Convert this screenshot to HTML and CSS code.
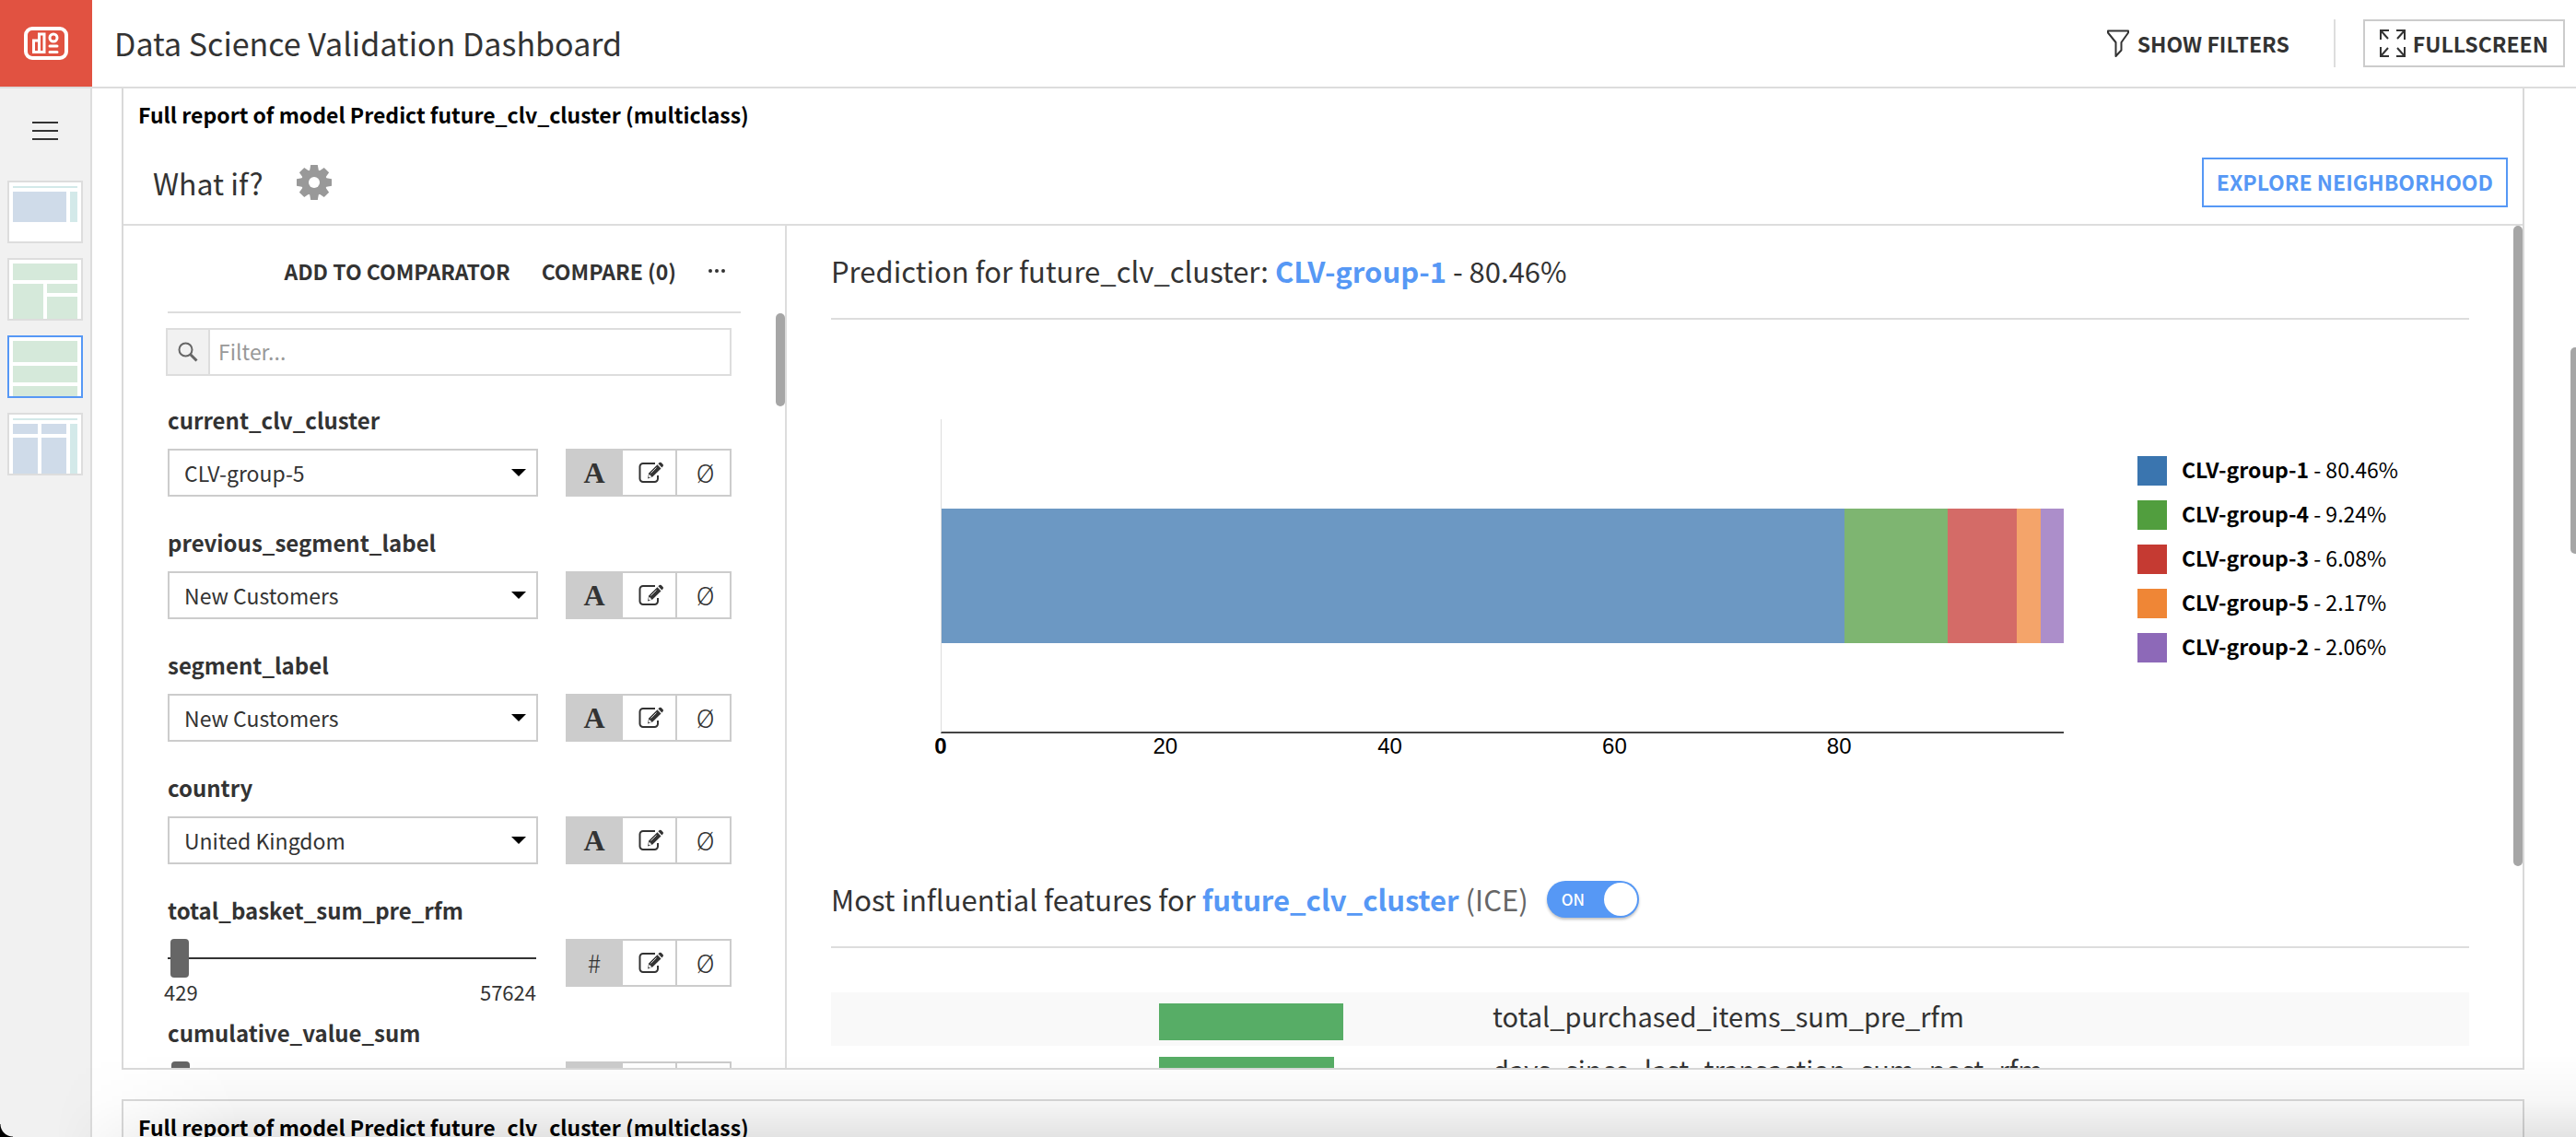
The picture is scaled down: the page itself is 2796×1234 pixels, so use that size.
FILE: index.html
```html
<!DOCTYPE html>
<html lang="en">
<head>
    <meta charset="UTF-8">
    <meta name="viewport" content="width=device-width, initial-scale=1.0">
    <title>Data Science Validation Dashboard</title>
    <link rel="stylesheet" href="styles.css">
</head>
<body>
    <svg class="icon-defs" width="0" height="0" aria-hidden="true">
        <symbol id="icon-edit" viewBox="0 0 28 24">
            <path d="M18 2H5a3.500 3.500 0 0 0-3.500 3.500v13A3.500 3.500 0 0 0 5 22h12.500a3.500 3.500 0 0 0 3.500-3.500V15" fill="none" stroke="#333" stroke-width="2"/>
            <path d="M20.500 3.200l4 4.200L15.300 16.600l-5.300 2 1.200-6z" fill="#333"/>
            <path d="M21.400 2.300l1.300-1.200q1-.9 2 0l1.900 2q.9 1 0 2l-1.200 1.300z" fill="#333"/>
            <path d="M11.900 14.300l2 2.200-1.900.6-.7-.7zM19.500 6.500l-6 6" fill="#fff" stroke="#fff" stroke-width=".8"/>
        </symbol>
    </svg>

    <header class="topbar">
        <a class="logo" href="#" aria-label="Dashboards">
            <svg width="48" height="36" viewBox="0 0 48 36" fill="none" stroke="#fff">
                <rect x="2" y="2" width="44" height="32" rx="7" stroke-width="4"/>
                <path d="M10.500 15h6v12.500h-6zM16.500 8h5.500v19.500h-5.500z" stroke-width="3"/>
                <circle cx="32" cy="12" r="4" stroke-width="3"/>
                <path d="M28 21h8M28 27.500h8" stroke-width="3" stroke-linecap="round"/>
            </svg>
        </a>
        <h1>Data Science Validation Dashboard</h1>
        <div class="topbar-actions">
            <button class="btn-plain">
                <svg width="24" height="30" viewBox="0 0 24 30" fill="none" stroke="#333" stroke-width="2" stroke-linejoin="round">
                    <path d="M1 1.500h22v2L15.500 14v8.500L9.500 29V14L1 3.500z"/>
                </svg>
                SHOW FILTERS
            </button>
            <span class="divider"></span>
            <button class="btn-outline">
                <svg width="28" height="30" viewBox="0 0 28 30" fill="none" stroke="#333" stroke-width="2">
                    <path d="M10 1H1v10M1 1l8 9M18 1h9v10M27 1l-8 9M1 19v10h9M1 29l8-9M27 19v10h-9M27 29l-8-9"/>
                </svg>
                FULLSCREEN
            </button>
        </div>
    </header>

    <div class="page">
        <nav class="sidebar">
            <button class="menu-btn" aria-label="Menu"><span></span><span></span><span></span></button>
            <a class="thumb" href="#" aria-label="Page 1">
                <svg width="78" height="64">
                    <path fill="#d3e9e9" d="M4 4h70v2H4zM66 10h8v33h-8z"/>
                    <path fill="#cfdbe9" d="M4 10h58v33H4z"/>
                </svg>
            </a>
            <a class="thumb" href="#" aria-label="Page 2">
                <svg width="78" height="64">
                    <path fill="#d5e9da" d="M4 4h70v18H4zM4 26h33v38H4zM41 26h33v10H41zM41 40h33v24H41z"/>
                </svg>
            </a>
            <a class="thumb active" href="#" aria-label="Page 3">
                <svg width="78" height="64">
                    <path fill="#d5e9da" d="M4 4h70v23H4zM4 31h70v18H4zM4 53h70v11H4z"/>
                </svg>
            </a>
            <a class="thumb" href="#" aria-label="Page 4">
                <svg width="78" height="64">
                    <path fill="#d3e9e9" d="M4 4h70v2H4zM66 10h8v54h-8z"/>
                    <path fill="#cfdbe9" d="M4 10h27v11H4zM35 10h27v11H35zM4 25h27v39H4zM35 25h27v39H35z"/>
                </svg>
            </a>
        </nav>

        <main class="board">
            <section class="tile tile-main">
                <h2 class="tile-title">Full report of model Predict future_clv_cluster (multiclass)</h2>
                <div class="whatif-bar">
                    <span class="whatif-title">What if?</span>
                    <button class="gear-btn" aria-label="Settings">
                        <svg width="38" height="38" viewBox="-19 -19 38 38" fill="#999">
                            <path id="tooth" d="M-5-12l1.200-7h7.600l1.200 7v24l-1.200 7h-7.600l-1.200-7z"/>
                            <use href="#tooth" transform="rotate(45)"/>
                            <use href="#tooth" transform="rotate(90)"/>
                            <use href="#tooth" transform="rotate(135)"/>
                            <circle r="14"/>
                            <circle r="6" fill="#fff"/>
                        </svg>
                    </button>
                    <button class="btn-explore">EXPLORE NEIGHBORHOOD</button>
                </div>

                <div class="panes">
                    <div class="inputs">
                        <div class="compare-bar">
                            <button>ADD TO COMPARATOR</button>
                            <button>COMPARE (0)</button>
                            <button aria-label="More">
                                <svg width="20" height="4" viewBox="0 0 20 4" fill="#333"><circle cx="3" cy="2" r="2"/><circle cx="10" cy="2" r="2"/><circle cx="17" cy="2" r="2"/></svg>
                            </button>
                        </div>
                        <div class="filter">
                            <label for="filter" aria-label="Filter">
                                <svg width="22" height="22" viewBox="0 0 22 22" fill="none" stroke="#666"><circle cx="8.500" cy="8.500" r="7" stroke-width="2"/><path d="M13.500 13.500l7 7" stroke-width="3"/></svg>
                            </label>
                            <input type="text" id="filter" placeholder="Filter...">
                        </div>

                        <div class="feature">
                            <label for="f1">current_clv_cluster</label>
                            <div class="feature-row">
                                <div class="select"><select id="f1"><option>CLV-group-5</option></select></div>
                                <div class="modes">
                                    <button class="on serif">A</button>
                                    <button aria-label="Edit"><svg width="28" height="24"><use href="#icon-edit"/></svg></button>
                                    <button>Ø</button>
                                </div>
                            </div>
                        </div>
                        <div class="feature">
                            <label for="f2">previous_segment_label</label>
                            <div class="feature-row">
                                <div class="select"><select id="f2"><option>New Customers</option></select></div>
                                <div class="modes">
                                    <button class="on serif">A</button>
                                    <button aria-label="Edit"><svg width="28" height="24"><use href="#icon-edit"/></svg></button>
                                    <button>Ø</button>
                                </div>
                            </div>
                        </div>
                        <div class="feature">
                            <label for="f3">segment_label</label>
                            <div class="feature-row">
                                <div class="select"><select id="f3"><option>New Customers</option></select></div>
                                <div class="modes">
                                    <button class="on serif">A</button>
                                    <button aria-label="Edit"><svg width="28" height="24"><use href="#icon-edit"/></svg></button>
                                    <button>Ø</button>
                                </div>
                            </div>
                        </div>
                        <div class="feature">
                            <label for="f4">country</label>
                            <div class="feature-row">
                                <div class="select"><select id="f4"><option>United Kingdom</option></select></div>
                                <div class="modes">
                                    <button class="on serif">A</button>
                                    <button aria-label="Edit"><svg width="28" height="24"><use href="#icon-edit"/></svg></button>
                                    <button>Ø</button>
                                </div>
                            </div>
                        </div>
                        <div class="feature">
                            <label for="f5">total_basket_sum_pre_rfm</label>
                            <div class="feature-row">
                                <div class="range">
                                    <input type="range" id="f5" min="429" max="57624" value="880">
                                    <div class="range-ends"><span>429</span><span>57624</span></div>
                                </div>
                                <div class="modes">
                                    <button class="on">#</button>
                                    <button aria-label="Edit"><svg width="28" height="24"><use href="#icon-edit"/></svg></button>
                                    <button>Ø</button>
                                </div>
                            </div>
                        </div>
                        <div class="feature">
                            <label for="f6">cumulative_value_sum</label>
                            <div class="feature-row">
                                <div class="range">
                                    <input type="range" id="f6" min="0" max="100" value="1">
                                </div>
                                <div class="modes">
                                    <button class="on" aria-label="Value"></button>
                                    <button aria-label="Edit"></button>
                                    <button aria-label="Empty"></button>
                                </div>
                            </div>
                        </div>
                        <span class="scrollbar"></span>
                    </div>

                    <div class="results">
                        <h3><span>Prediction for future_clv_cluster: <b>CLV-group-1</b> - 80.46%</span></h3>
                        <div class="chart">
                            <div class="plot">
                                <div class="plot-area">
                                    <div class="stack">
                                        <span class="g1" style="width: 80.46%"></span>
                                        <span class="g4" style="width: 9.24%"></span>
                                        <span class="g3" style="width: 6.08%"></span>
                                        <span class="g5" style="width: 2.17%"></span>
                                        <span class="g2" style="width: 2.06%"></span>
                                    </div>
                                </div>
                                <div class="ticks">
                                    <span><b>0</b></span>
                                    <span>20</span>
                                    <span>40</span>
                                    <span>60</span>
                                    <span>80</span>
                                </div>
                            </div>
                            <ul class="legend">
                                <li class="l1"><b>CLV-group-1</b> - 80.46%</li>
                                <li class="l4"><b>CLV-group-4</b> - 9.24%</li>
                                <li class="l3"><b>CLV-group-3</b> - 6.08%</li>
                                <li class="l5"><b>CLV-group-5</b> - 2.17%</li>
                                <li class="l2"><b>CLV-group-2</b> - 2.06%</li>
                            </ul>
                        </div>

                        <h3>
                            <span>Most influential features for <b>future_clv_cluster</b> <span class="muted">(ICE)</span></span>
                            <label class="toggle"><input type="checkbox" checked aria-label="ICE"><span>ON</span></label>
                        </h3>
                        <table class="influence">
                            <tr>
                                <td><div class="bar" style="width: 200px"></div></td>
                                <td>total_purchased_items_sum_pre_rfm</td>
                            </tr>
                            <tr>
                                <td><div class="bar" style="width: 190px"></div></td>
                                <td>days_since_last_transaction_sum_post_rfm</td>
                            </tr>
                        </table>
                        <span class="scrollbar"></span>
                    </div>
                </div>
            </section>

            <section class="tile tile-next">
                <h2 class="tile-title">Full report of model Predict future_clv_cluster (multiclass)</h2>
            </section>
            <span class="scrollbar"></span>
        </main>
        <div class="fade"></div>
    </div>
</body>
</html>
```

FILE: styles.css
```css
* {
    box-sizing: border-box;
}
body {
    margin: 0;
    height: 100vh;
    display: flex;
    flex-direction: column;
    overflow: hidden;
    background-color: #fff;
    color: #333;
    font-family: "Noto Sans CJK SC", "Open Sans", sans-serif;
    font-size: 23px;
    line-height: 32px;
}
h1, h2, h3, ul {
    margin: 0;
    padding: 0;
    font-weight: 400;
}
b {
    font-weight: 700;
}
button {
    display: flex;
    align-items: center;
    justify-content: center;
    padding: 0;
    border: none;
    background: none;
    color: #333;
    font: inherit;
    font-weight: 700;
    cursor: pointer;
}
svg {
    display: block;
    flex: none;
}
.icon-defs {
    position: absolute;
}
.scrollbar {
    position: absolute;
    background-color: #a6a6a6;
    border-radius: 5px;
}

/* top bar */
.topbar {
    flex: none;
    display: flex;
    align-items: center;
    height: 96px;
    padding-right: 12px;
    border-bottom: 2px solid #ddd;
}
.logo {
    display: flex;
    align-items: center;
    justify-content: center;
    width: 100px;
    height: 94px;
    background-color: #e15241;
}
.topbar h1 {
    margin-left: 24px;
    font-size: 34px;
}
.topbar-actions {
    display: flex;
    align-items: center;
    margin-left: auto;
}
.topbar-actions button {
    gap: 9px;
    height: 52px;
    padding-bottom: 1px;
}
.divider {
    width: 2px;
    height: 52px;
    margin: 0 30px 0 48px;
    background-color: #ddd;
}
.topbar-actions .btn-outline {
    gap: 8px;
    padding: 0 16px 1px;
    border: 2px solid #ccc;
}

/* side navigation */
.page {
    flex: 1;
    display: flex;
    min-height: 0;
    position: relative;
}
.page::after {
    content: "";
    position: absolute;
    left: 0;
    bottom: 0;
    width: 14px;
    height: 14px;
    background: radial-gradient(circle at 100% 0, transparent 13px, #000 14px);
}
.sidebar {
    flex: none;
    display: flex;
    flex-direction: column;
    align-items: flex-start;
    gap: 16px;
    width: 100px;
    padding: 0 8px;
    border-right: 2px solid #ddd;
    background-color: #f1f1f1;
}
.menu-btn {
    flex-direction: column;
    gap: 7px;
    width: 82px;
    height: 84px;
    padding-top: 8px;
}
.menu-btn span {
    width: 28px;
    height: 2px;
    background-color: #333;
}
.thumb {
    border: 2px solid #ddd;
    background-color: #fff;
}
.thumb.active {
    border-color: #5698f5;
}

/* board and tiles */
.board {
    flex: 1;
    display: flex;
    flex-direction: column;
    gap: 32px;
    min-width: 0;
    padding: 0 56px 0 32px;
    position: relative;
}
.board > .scrollbar {
    top: 281px;
    right: 0;
    width: 6px;
    height: 224px;
    border-radius: 5px 0 0 5px;
}
.tile {
    border: 2px solid #d9d9d9;
    overflow: hidden;
}
.tile-title {
    padding: 12px 16px;
    color: #000;
    font-size: 23px;
    font-weight: 700;
}
.tile-main {
    flex: 1;
    display: flex;
    flex-direction: column;
    min-height: 0;
    border-top: none;
}
.tile-next {
    flex: none;
    height: 41px;
    border-bottom: none;
}
.whatif-bar {
    display: flex;
    align-items: center;
    height: 93px;
    padding: 0 16px 0 32px;
    border-bottom: 2px solid #ddd;
}
.whatif-title {
    font-size: 32px;
}
.gear-btn {
    margin-left: 36px;
}
.btn-explore {
    height: 54px;
    margin-left: auto;
    padding: 0 14px 1px;
    border: 2px solid #5698f5;
    color: #5698f5;
}
.panes {
    flex: 1;
    display: flex;
    min-height: 0;
}

/* feature inputs */
.inputs {
    flex: none;
    width: 720px;
    padding: 0 58px 0 48px;
    border-right: 2px solid #ddd;
    position: relative;
    overflow: hidden;
}
.inputs > .scrollbar {
    top: 95px;
    right: 0;
    width: 10px;
    height: 101px;
}
.compare-bar {
    display: flex;
    align-items: center;
    justify-content: flex-end;
    gap: 34px;
    width: 622px;
    height: 95px;
    padding: 4px 16px 0 0;
    border-bottom: 2px solid #ddd;
}
.filter {
    display: flex;
    width: 614px;
    height: 52px;
    margin: 16px 0 32px -2px;
    border: 2px solid #ddd;
}
.filter label {
    display: flex;
    align-items: center;
    justify-content: center;
    width: 46px;
    border-right: 2px solid #ddd;
    background-color: #f1f1f1;
}
.filter input {
    flex: 1;
    padding: 0 9px 2px;
    border: none;
    font: inherit;
}
.filter input::placeholder {
    color: #999;
}
.feature {
    height: 133px;
}
.feature > label {
    display: block;
    margin-bottom: 15px;
    font-size: 24px;
    font-weight: 700;
}
.feature-row {
    display: flex;
    justify-content: space-between;
    align-items: flex-start;
    width: 612px;
}
.select {
    width: 402px;
    position: relative;
}
.select::after {
    content: "";
    position: absolute;
    top: 22px;
    right: 13px;
    border: 8px solid transparent;
    border-top-color: #000;
    border-bottom: none;
    pointer-events: none;
}
.select select {
    width: 100%;
    height: 52px;
    padding: 0 16px;
    border: 2px solid #ccc;
    border-radius: 0;
    background-color: #fff;
    color: #333;
    font: inherit;
    appearance: none;
}
.modes {
    display: flex;
    width: 180px;
    height: 52px;
    border: 2px solid #ccc;
}
.modes button {
    flex: none;
    width: 59px;
    padding-left: 4px;
    border-left: 2px solid #ccc;
    font-size: 27px;
    font-weight: 300;
}
.modes .on {
    width: 58px;
    padding: 0;
    border-left: none;
    background-color: #ccc;
}
.modes .serif {
    font: bold 32px "Liberation Serif", serif;
}
.range {
    width: 402px;
}
.range input {
    display: block;
    width: 400px;
    height: 42px;
    margin: 0;
    background: linear-gradient(#333, #333) center / 100% 2px no-repeat;
    appearance: none;
}
.range input::-webkit-slider-thumb {
    width: 20px;
    height: 42px;
    border-radius: 4px;
    background-color: #666;
    appearance: none;
}
.range-ends {
    display: flex;
    justify-content: space-between;
    margin: 1px 2px 0 -4px;
    font-size: 22px;
    line-height: 28px;
}

/* prediction results */
.results {
    flex: 1;
    min-width: 0;
    padding: 0 58px 0 48px;
    position: relative;
    overflow: hidden;
}
.results > .scrollbar {
    top: 0;
    right: 0;
    width: 10px;
    height: 695px;
}
.results h3 {
    display: flex;
    align-items: center;
    height: 102px;
    padding-bottom: 2px;
    border-bottom: 2px solid #ddd;
    font-size: 31px;
}
.results h3 b {
    color: #5698f5;
}
.muted {
    color: #666;
}
.chart {
    display: flex;
    gap: 80px;
    height: 580px;
    padding: 108px 0 0 119px;
}
.plot {
    flex: 1;
}
.plot-area {
    height: 341px;
    padding-top: 97px;
    border-left: 1px solid #ddd;
    border-bottom: 2px solid #444;
}
.stack {
    display: flex;
    height: 146px;
}
.g1 { background-color: #6c98c3; }
.g4 { background-color: #7eb571; }
.g3 { background-color: #d46b67; }
.g5 { background-color: #f4a46a; }
.g2 { background-color: #ac8eca; }
.ticks {
    display: flex;
    color: #000;
    font-family: "Liberation Sans", Arial, sans-serif;
    font-size: 24px;
    line-height: 28px;
}
.ticks span {
    flex: 0 0 20%;
    margin-left: -10%;
    margin-right: 10%;
    text-align: center;
}
.legend {
    width: 360px;
    margin-top: 40px;
    color: #000;
    line-height: 28px;
    list-style: none;
}
.legend li {
    margin-bottom: 16px;
    padding: 0 0 4px 16px;
    border-left: 32px solid;
}
.legend .l1 { border-color: #3a75af; }
.legend .l4 { border-color: #519e3e; }
.legend .l3 { border-color: #c53a32; }
.legend .l5 { border-color: #ef8636; }
.legend .l2 { border-color: #8d69b8; }

.toggle {
    display: flex;
    align-items: center;
    width: 100px;
    height: 40px;
    margin-left: 20px;
    padding-left: 16px;
    border-radius: 20px;
    background-color: #5698f5;
    box-shadow: 0 2px 3px rgba(0, 0, 0, 0.25);
    color: #fff;
    font-size: 17px;
    font-weight: 500;
    position: relative;
}
.toggle input {
    position: absolute;
    top: 2px;
    right: 2px;
    width: 36px;
    height: 36px;
    margin: 0;
    border-radius: 50%;
    background-color: #fff;
    appearance: none;
}
.influence {
    width: 100%;
    margin-top: 48px;
    border-collapse: collapse;
    table-layout: fixed;
    font-size: 29px;
}
.influence tr:nth-child(odd) {
    background-color: #f9f9f9;
}
.influence td {
    height: 58px;
    padding: 0 0 8px;
}
.influence td:first-child {
    width: 718px;
    padding: 6px 0 0 356px;
}
.bar {
    height: 40px;
    background-color: #57ad66;
}

/* darkening along the lower window edge */
.fade {
    position: absolute;
    left: 0;
    right: 0;
    bottom: 0;
    height: 90px;
    background: linear-gradient(rgba(0, 0, 0, 0), rgba(0, 0, 0, 0.03) 55%, rgba(0, 0, 0, 0.11));
    -webkit-mask-image: linear-gradient(90deg, transparent 60px, #000 260px);
    mask-image: linear-gradient(90deg, transparent 60px, #000 260px);
    pointer-events: none;
}
```
